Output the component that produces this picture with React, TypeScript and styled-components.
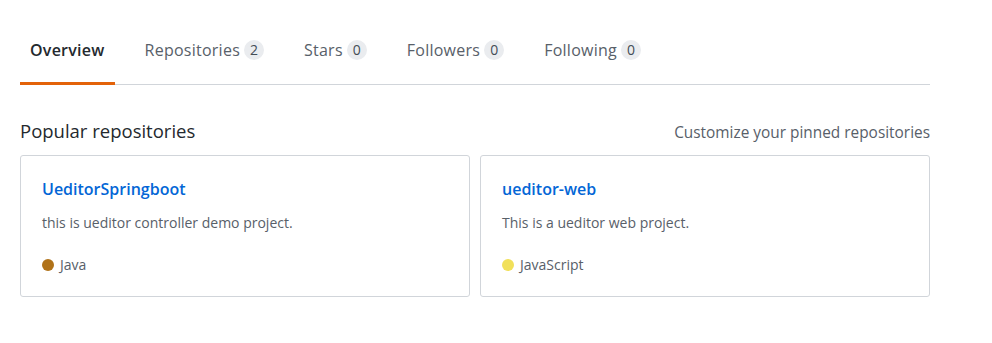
import React from "react";
import styled, { createGlobalStyle } from "styled-components";

const GlobalStyle = createGlobalStyle`
  body {
    margin: 0;
    padding: 0;
    background: #ffffff;
    font-family: "Open Sans", "Noto Sans", sans-serif;
    color: #24292e;
  }
`;

const Page = styled.div`
  width: 910px;
  padding: 21px 0 0 20px;
`;

const Nav = styled.nav`
  display: flex;
  border-bottom: 1px solid #d1d5da;
`;

const Tab = styled.a<{ $active?: boolean }>`
  display: flex;
  align-items: center;
  padding: 17px 10px 20px;
  margin-right: 20px;
  margin-bottom: -1px;
  line-height: 24px;
  font-size: 16px;
  letter-spacing: 0.25px;
  font-weight: ${(p) => (p.$active ? 600 : 400)};
  color: ${(p) => (p.$active ? "#24292e" : "#586069")};
  border-bottom: 3px solid ${(p) => (p.$active ? "#e36209" : "transparent")};
  text-decoration: none;
  cursor: pointer;
`;

const Count = styled.span`
  display: inline-block;
  min-width: 20px;
  height: 20px;
  margin-left: 4px;
  border-radius: 10px;
  background: #eaecef;
  color: #444d56;
  font-size: 14px;
  letter-spacing: 0;
  line-height: 20px;
  text-align: center;
`;

const SectionHead = styled.div`
  display: flex;
  justify-content: space-between;
  align-items: baseline;
  margin: 34px 0 12px;
`;

const Title = styled.h2`
  margin: 0;
  font-size: 18.5px;
  font-weight: 400;
  line-height: 24px;
`;

const Customize = styled.a`
  font-size: 15.4px;
  color: #586069;
  text-decoration: none;
`;

const Grid = styled.div`
  display: grid;
  grid-template-columns: 450px 450px;
  gap: 10px;
`;

const Card = styled.div`
  border: 1px solid #d1d5da;
  border-radius: 3px;
  padding: 21px 21px;
`;

const RepoName = styled.a`
  display: block;
  font-size: 16px;
  font-weight: 600;
  line-height: 24px;
  color: #0366d6;
  text-decoration: none;
`;

const Desc = styled.p`
  margin: 11px 0 21px;
  font-size: 14px;
  line-height: 21px;
  color: #586069;
`;

const Lang = styled.div`
  display: flex;
  align-items: center;
  font-size: 14px;
  line-height: 21px;
  color: #586069;
`;

const Dot = styled.span<{ $color: string }>`
  width: 12px;
  height: 12px;
  border-radius: 50%;
  background: ${(p) => p.$color};
  margin-right: 6px;
`;

const tabs = [
  { label: "Overview", active: true },
  { label: "Repositories", count: 2 },
  { label: "Stars", count: 0 },
  { label: "Followers", count: 0 },
  { label: "Following", count: 0 },
];

const repos = [
  { name: "UeditorSpringboot", desc: "this is ueditor controller demo project.", lang: "Java", color: "#b07219" },
  { name: "ueditor-web", desc: "This is a ueditor web project.", lang: "JavaScript", color: "#f1e05a" },
];

const App: React.FC = () => {
  return (
    <>
      <GlobalStyle />
      <Page>
        <Nav>
          {tabs.map((t) => (
            <Tab key={t.label} $active={t.active}>
              {t.label}
              {t.count !== undefined && <Count>{t.count}</Count>}
            </Tab>
          ))}
        </Nav>
        <SectionHead>
          <Title>Popular repositories</Title>
          <Customize>Customize your pinned repositories</Customize>
        </SectionHead>
        <Grid>
          {repos.map((r) => (
            <Card key={r.name}>
              <RepoName>{r.name}</RepoName>
              <Desc>{r.desc}</Desc>
              <Lang>
                <Dot $color={r.color} />
                {r.lang}
              </Lang>
            </Card>
          ))}
        </Grid>
      </Page>
    </>
  );
};

export default App;
